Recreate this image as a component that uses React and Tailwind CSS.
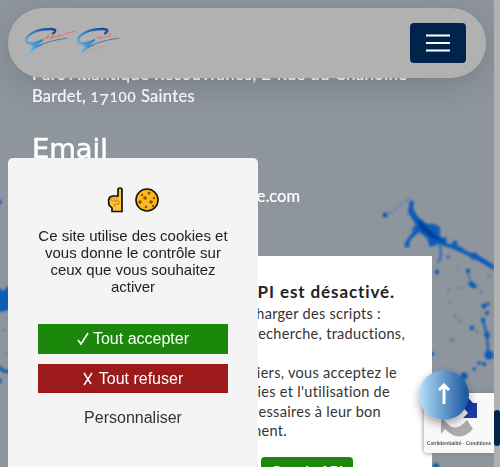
function Header() {
  return (
    <header className="absolute left-2 top-2 z-20 flex h-[70px] w-[478px] items-center justify-between rounded-full bg-[#b1b1b1] pl-4 pr-5 shadow-[0_8px_32px_rgba(0,0,0,0.15)]">
      <svg width="98" height="32" viewBox="0 0 98 32" className="-mt-0.5" fill="none" strokeLinecap="round">
        <defs>
          <linearGradient id="mark" gradientUnits="userSpaceOnUse" x1="30" y1="3" x2="5" y2="28">
            <stop stopColor="#124497" />
            <stop offset=".5" stopColor="#347fc0" />
            <stop offset="1" stopColor="#68c1ed" />
          </linearGradient>
        </defs>
        {[0, 52].map((x) => (
          <g key={x} transform={`translate(${x} 0)`}>
            <path d="M29 7.500C33 5 31.500 2.800 26 3C14 3 4 7.500 2.300 13C1 18 8 19 18 14.500" stroke="url(#mark)" strokeWidth="2.300" />
            <path d="M19.500 13L13 20L20 18.500L11 23L2 30.500L9 20.500L6 19Z" fill="url(#mark)" />
            <path d="M12 20.500Q24 15 43 12" stroke="#4470aa" strokeWidth=".9" />
          </g>
        ))}
        <path d="M20 13l5-4-3 4 4-2 1 2 2-5-1 4 3-2 1 2 3-4-1 3 3-2 2 1 3-3 3 0 6-2M73 12l4-2-2 3 4-2 1 1 3-2 1 1 3-4-1 4" stroke="#dd6859" strokeWidth=".7" />
        <path d="M61 27l4-2m2 0l5-2m2 0l5-3" stroke="#cc9690" strokeWidth=".8" />
      </svg>
      <button className="flex h-10 w-14 items-center justify-center rounded bg-[#00244c]">
        <svg width="24" height="20" stroke="white" strokeWidth="2">
          <path d="M0 2.500h24M0 10h24M0 17.500h24" />
        </svg>
      </button>
    </header>
  );
}

const DROPS = [
  [385, 215, 2.5], [407, 245, 2.5], [455, 243, 2.5], [474, 256, 3.5], [448, 257, 1.5],
  [437, 272, 2.2], [468, 271, 2.2], [471, 284, 2.5], [474, 286, 2.5], [484, 306, 2.5],
  [488, 304, 1.8], [487, 313, 2], [483, 320, 2.3], [472, 328, 2.3], [489, 355, 4.5],
  [479, 363, 1.8], [484, 364, 2], [464, 376, 3.5], [474, 369, 1.8], [432, 354, 2],
  [436, 466, 3],
];

const FAINT_DROPS = [
  [449, 290, 1.5], [457, 288, 1.2], [463, 288, 1], [481, 292, 1.5], [458, 269, 1],
  [450, 302, 1], [455, 316, 1.5], [460, 321, 1.5], [452, 340, 2], [477, 332, 1.5],
  [489, 276, 1.5], [4, 330, 1.5], [6, 353, 1],
];

function Splatter() {
  return (
    <svg className="absolute inset-0" width="494" height="467">
      <defs><filter id="soft"><feGaussianBlur stdDeviation=".9" /></filter></defs>
      <g filter="url(#soft)" fill="#075bb8">
        <path d="M410 200L414 202L413 209L418 217L427 224L434 224L440 227L440 237L447 238L446 243L459 246L468 252L476 254L494 265V270L475 259L462 253L451 248L438 244L430 247L427 238L419 232L411 239L408 246L405 243L411 234L415 229L410 231L416 225L408 212Z" />
        <path d="M418 219L435 235L446 243L431 237L420 228Z" fill="#063f94" />
        <path d="M409 199L391 212L386 216" stroke="#4a7db0" strokeWidth="1.200" strokeDasharray="5 2" fill="none" />
        <path d="M440 245L441 256L438 263" stroke="#246ab3" strokeWidth="2" fill="none" />
        <path d="M467 271L470 280L475 286" stroke="#396fac" strokeWidth="1.500" fill="none" />
        <path d="M483 320L487 335L488 350L493 358" stroke="#125eb5" strokeWidth="2.200" fill="none" />
        <circle cx="487" cy="335" r="2.800" />
        {DROPS.map(([x, y, r]) => (
          <circle key={`${x}-${y}`} cx={x} cy={y} r={r} />
        ))}
        <g opacity=".4">
          {FAINT_DROPS.map(([x, y, r]) => (
            <circle key={`${x}-${y}`} cx={x} cy={y} r={r} />
          ))}
        </g>
        <path d="M-3 286L3 291L8 286H12V308L5 311L-3 312Z" />
        <path d="M-3 366L4 371L10 372" fill="none" stroke="#075bb8" strokeWidth="3" />
        <circle cx="-1" cy="202" r="2.500" />
        <circle cx="-1" cy="381" r="2.500" />
      </g>
    </svg>
  );
}

function CookiePanel() {
  return (
    <section className="absolute left-2 top-[158px] z-10 h-[320px] w-[250px] rounded-[5px] bg-[#f4f4f4] px-[30px] pt-[28px] text-center font-['Liberation_Sans',sans-serif] text-[16px] text-[#222]">
      <div className="flex h-[27px] items-center justify-center gap-[10px]">
        <svg width="18" height="26" viewBox="0 0 18 26">
          <path d="M11 9V3Q11 1 13 1Q15 1 15 3V24.500H5V21L2 18L1.500 13L3 10L6 9Z" fill="#ffc23d" stroke="#16120b" strokeWidth="1.700" />
          <path d="M4 13V10m3 3V10m3 4V10m-6 4h8v3H7l1 3" fill="none" stroke="#bb7a18" strokeWidth=".8" />
        </svg>
        <svg width="24" height="24" viewBox="0 0 24 24">
          <circle cx="12" cy="12" r="11" fill="#ffb915" stroke="#17130e" strokeWidth="1.600" />
          <g fill="#79502b"><circle cx="7" cy="7" r="1.200" /><circle cx="14" cy="5" r="1.500" /><circle cx="10" cy="10" r="1.800" /><circle cx="19" cy="10" r="1.200" /><circle cx="5" cy="14" r="1.800" /><circle cx="16" cy="14" r="1.800" /><circle cx="11" cy="19" r="1.300" /><circle cx="18" cy="18" r="1.200" /></g>
        </svg>
      </div>
      <p className="mt-[14px] whitespace-nowrap text-[15px] leading-[17px]">
        Ce site utilise des cookies et<br />vous donne le contrôle sur<br />ceux que vous souhaitez<br />activer
      </p>
      <button className="mt-[29px] flex h-[30px] w-full items-center justify-center gap-1 bg-[#1b870b] text-white">
        <svg width="12" height="14" fill="none" stroke="white" strokeWidth="1.600"><path d="M1 8l3 4L11 1" /></svg>
        Tout accepter
      </button>
      <button className="mt-[10px] flex h-[29px] w-full items-center justify-center gap-1.5 bg-[#9c1a1a] text-white">
        <svg width="10" height="14" fill="none" stroke="white" strokeWidth="1.500"><path d="M1 1l7 11M9 1L1 13" /></svg>
        Tout refuser
      </button>
      <p className="mt-[15px] leading-5 text-[#333]">Personnaliser</p>
    </section>
  );
}

function MapNotice() {
  return (
    <section className="absolute left-8 top-[256px] flex h-[211px] w-[400px] flex-col items-end overflow-hidden whitespace-nowrap bg-white pt-[26px] text-[14.5px] leading-[19.5px] text-[#333]">
      <h3 className="pr-[37px] text-[17px] font-bold leading-5 tracking-[0.9px] text-[#222]">API est désactivé.</h3>
      <p className="mt-[2px] pr-[51px] tracking-[0.3px]">charger des scripts :</p>
      <p className="pr-[27px] tracking-[0.3px]">recherche, traductions,</p>
      <p className="mt-[19.5px] pr-[35px] tracking-[0.3px]">fichiers, vous acceptez le</p>
      <p className="pr-[42px] tracking-[0.3px]">cookies et l'utilisation de</p>
      <p className="pr-[51px] tracking-[0.3px]">nécessaires à leur bon</p>
      <p className="pr-[145px] tracking-[0.3px]">fonctionnement.</p>
      <button className="mr-[79px] mt-4 flex h-9 shrink-0 items-start rounded bg-[#1b870b] px-[10px] pt-[6px] font-bold leading-[18px] text-white">Google API</button>
    </section>
  );
}

export default function App() {
  return (
    <main className="relative h-[467px] w-[500px] overflow-hidden bg-[#8e959d] font-[Lato,sans-serif]">
      <Splatter />
      <div className="relative pl-8 pt-[63px] text-[16.5px] leading-[22px] text-white [-webkit-text-stroke:0.2px_white]">
        <p className="whitespace-nowrap tracking-[0.5px]">Parc Atlantique Recouvrance, 2 Rue du Chanoine</p>
        <p className="h-[22px] tracking-[0.3px]">Bardet, <span className="text-[14px] tracking-[0.8px]">1<span className="relative top-[3px] text-[16px]">7</span>100</span> Saintes</p>
        <h2 className="mt-[24px] origin-left scale-x-105 font-['DejaVu_Sans',sans-serif] text-[26px] leading-9 [-webkit-text-stroke:0.5px_white]">Email</h2>
        <p className="mt-[18px] w-[268px] text-right">e.com</p>
      </div>
      <MapNotice />
      <Header />
      <CookiePanel />
      <aside className="absolute left-[424px] top-[393px] z-10 h-[60px] w-[70px] overflow-hidden rounded-l-[3px] bg-[#f9f9f9] shadow-[0_0_5px_gray]">
        <svg width="70" height="48" className="block">
          <path d="M53 10v15H39l5-5Q39 13 29 11V0Q41 0 49 10Z" fill="#1c3aa9" />
          <path d="M17 24l5 5q9 12 21-2l6 9Q35 51 21 36l-4 5Z" fill="#ababab" />
        </svg>
        <p className="-mt-px whitespace-nowrap text-center font-['DejaVu_Sans',sans-serif] text-[5px] leading-[6px] tracking-[-0.15px] text-black">Confidentialité - Conditions</p>
      </aside>
      <button className="absolute left-[419px] top-[370px] z-20 flex size-[50px] items-center justify-center rounded-full bg-linear-to-r from-[#b5e2fb] to-[#13529b] shadow-[0_4px_10px_rgba(0,0,0,0.35)]">
        <svg width="14" height="22" className="-mt-0.5" fill="none" stroke="white" strokeWidth="3"><path d="M7 21V3M2 7l5-5 5 5" /></svg>
      </button>
      <div className="absolute right-0 top-0 z-30 h-full w-1.5 bg-[#b1b1b1] pt-[410px]">
        <div className="h-9 rounded bg-[#00244c]" />
      </div>
    </main>
  );
}
